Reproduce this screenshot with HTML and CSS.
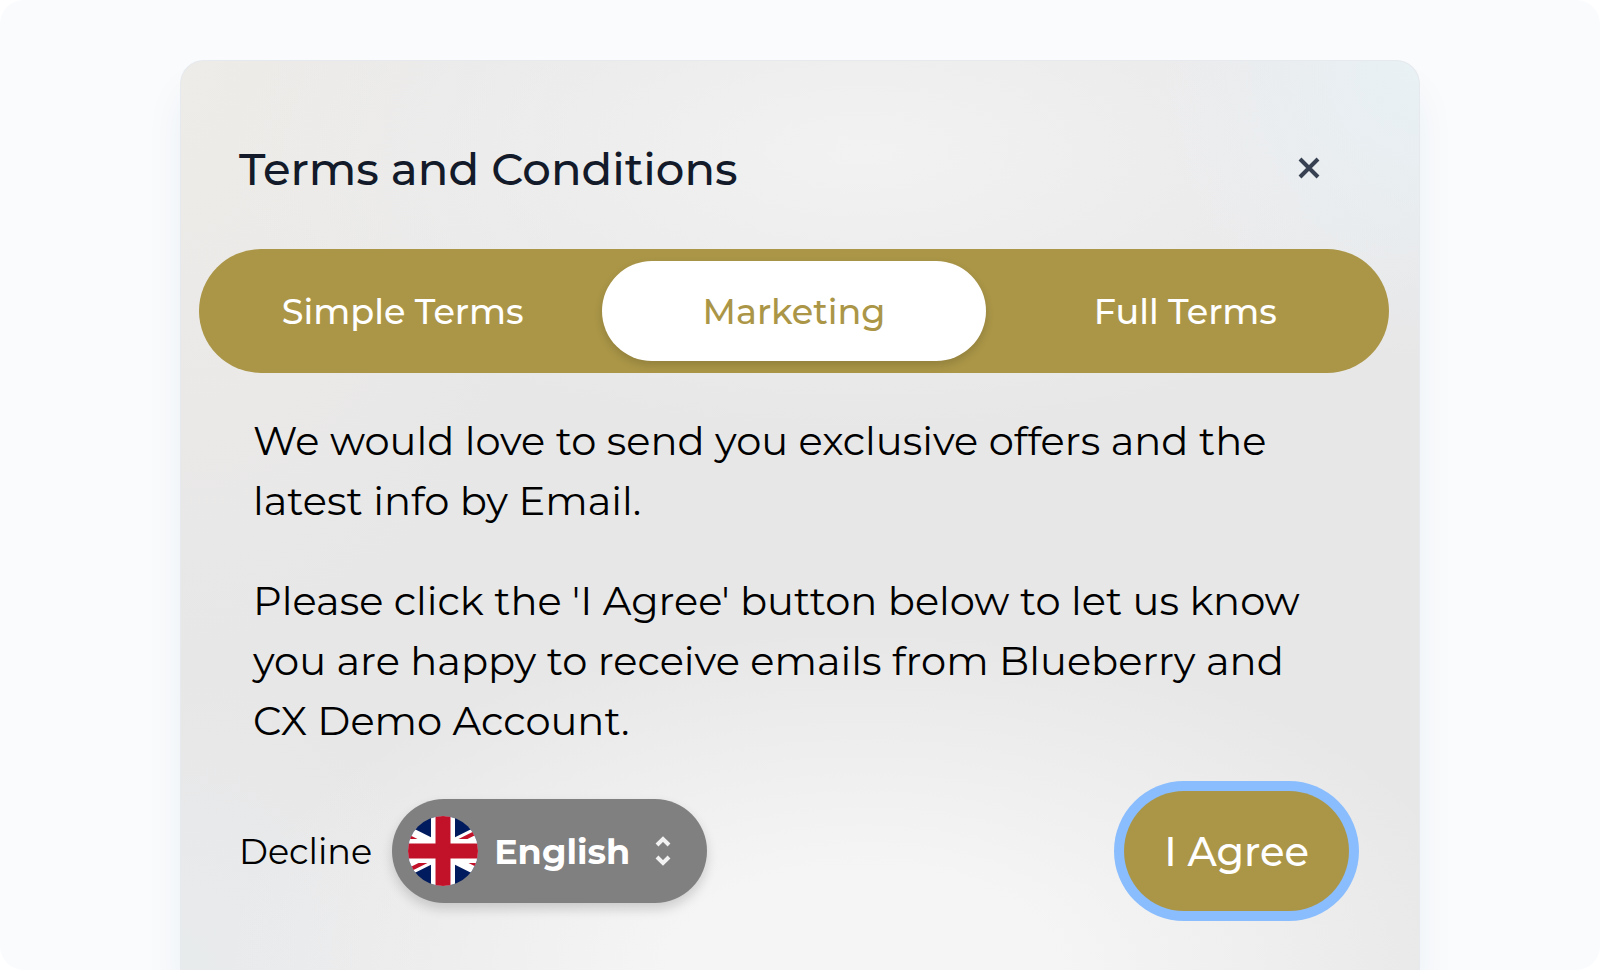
FILE: index.html
```html
<!DOCTYPE html>
<html lang="en">
<head>
    <meta charset="UTF-8">
    <meta name="viewport" content="width=device-width, initial-scale=1.0">
    <title>Terms and Conditions</title>
    <link rel="stylesheet" href="styles.css">
</head>
<body>
    <div class="page">
        <main class="modal" role="dialog" aria-labelledby="modal-title">
            <header class="modal-header">
                <h1 id="modal-title">Terms and Conditions</h1>
                <button type="button" class="close" aria-label="Close">
                    <svg width="24" height="24" viewBox="0 0 24 24" fill="none" stroke="currentColor" stroke-width="4">
                        <path d="M3 3l18 18M21 3L3 21"/>
                    </svg>
                </button>
            </header>

            <div class="tabs" role="tablist">
                <button type="button" class="tab" role="tab" aria-selected="false">Simple Terms</button>
                <button type="button" class="tab active" role="tab" aria-selected="true">Marketing</button>
                <button type="button" class="tab" role="tab" aria-selected="false">Full Terms</button>
            </div>

            <div class="content">
                <p>We would love to send you exclusive offers and the latest info by Email.</p>
                <p>Please click the 'I Agree' button below to let us know you are happy to receive emails from Blueberry and CX Demo Account.</p>
            </div>

            <footer class="modal-footer">
                <button type="button" class="decline">Decline</button>

                <div class="language">
                    <svg class="flag" width="70" height="70" viewBox="0 0 70 70">
                        <clipPath id="circle"><circle cx="35" cy="35" r="35"/></clipPath>
                        <g clip-path="url(#circle)">
                            <rect width="70" height="70" fill="#001b5e"/>
                            <path d="M-35 0L105 70M105 0L-35 70" stroke="#fff" stroke-width="14"/>
                            <path d="M35 33L105 -2M35 37L-35 72M35 38L-35 3M35 32L105 67" stroke="#c21229" stroke-width="4"/>
                            <path d="M35 0v70M0 35h70" stroke="#fff" stroke-width="24"/>
                            <path d="M35 0v70M0 35h70" stroke="#c21229" stroke-width="15"/>
                        </g>
                    </svg>
                    <select aria-label="Language">
                        <option>English</option>
                    </select>
                    <svg class="arrows" width="20" height="32" viewBox="0 0 20 32" fill="none" stroke="#f2f2f2" stroke-width="4">
                        <path d="M4 10l6-6 6 6M4 22l6 6 6-6"/>
                    </svg>
                </div>

                <button type="button" class="agree">I Agree</button>
            </footer>
        </main>
    </div>
</body>
</html>
```

FILE: styles.css
```css
* {
    box-sizing: border-box;
}
body {
    margin: 0;
    background: white;
    font-family: Montserrat, Inter, sans-serif;
    color: black;
}
button, select {
    border: none;
    background: none;
    padding: 0;
    font-family: inherit;
    color: inherit;
    cursor: pointer;
}
.page {
    display: flex;
    min-height: 100vh;
    padding: 60px 180px 0;
    background: #f9fbfd;
    border-radius: 24px;
    overflow: hidden;
}
.modal {
    flex: 1;
    padding: 80px 30px 48px 18px;
    border: 1px solid #e6e9ed;
    border-bottom: none;
    border-radius: 24px 24px 0 0;
    background:
        radial-gradient(ellipse 260px 300px at 100% 0, #e8f1f5, transparent),
        radial-gradient(ellipse 640px 280px at 55% 10%, #f2f2f3, transparent),
        radial-gradient(ellipse 640px 340px at 55% 100%, #f5f5f6 30%, transparent),
        radial-gradient(ellipse 260px 300px at 0 100%, #e8ebec, transparent),
        radial-gradient(ellipse 400px 600px at 0 0, #edece8, transparent),
        #e8e7e8;
    box-shadow: 0 28px 40px rgba(30, 50, 80, 0.05);
}
.modal-header {
    display: flex;
    align-items: center;
    justify-content: space-between;
    height: 54px;
    padding: 0 62px 0 40px;
    margin-bottom: 54px;
}
h1 {
    margin: 0;
    font-size: 45px;
    font-weight: 500;
    color: #131a29;
}
.close {
    width: 36px;
    height: 36px;
    color: #374151;
}
.close svg {
    display: block;
    margin: 0 auto;
}
.tabs {
    display: flex;
    gap: 8px;
    height: 124px;
    padding: 12px;
    border-radius: 62px;
    background: #ab9647;
}
.tab {
    flex: 1;
    border-radius: 50px;
    font-size: 35px;
    font-weight: 500;
    color: white;
}
.tab.active {
    background: white;
    color: #ab9647;
    box-shadow: 0 4px 8px rgba(0, 0, 0, 0.15);
}
.content {
    padding: 38px 54px 0;
    font-size: 40px;
    line-height: 60px;
}
.content p {
    margin: 0 0 40px;
}
.modal-footer {
    display: flex;
    align-items: center;
    gap: 20px;
    padding: 0 40px;
}
.decline {
    font-size: 35px;
}
.language {
    position: relative;
    height: 104px;
    border-radius: 52px;
    background: #808080;
    box-shadow: 0 6px 12px rgba(0, 0, 0, 0.16);
}
.language select {
    appearance: none;
    height: 104px;
    padding: 0 76px 0 102px;
    border-radius: 52px;
    font-size: 35px;
    font-weight: 700;
    color: white;
}
.flag, .arrows {
    position: absolute;
    pointer-events: none;
}
.flag {
    top: 17px;
    left: 16px;
}
.arrows {
    top: 36px;
    right: 34px;
}
.agree {
    height: 120px;
    padding: 0 40px;
    margin-left: auto;
    border-radius: 60px;
    background: #ab9647;
    font-size: 40px;
    font-weight: 500;
    color: white;
    box-shadow: 0 0 0 10px #89bdfe;
}
```
